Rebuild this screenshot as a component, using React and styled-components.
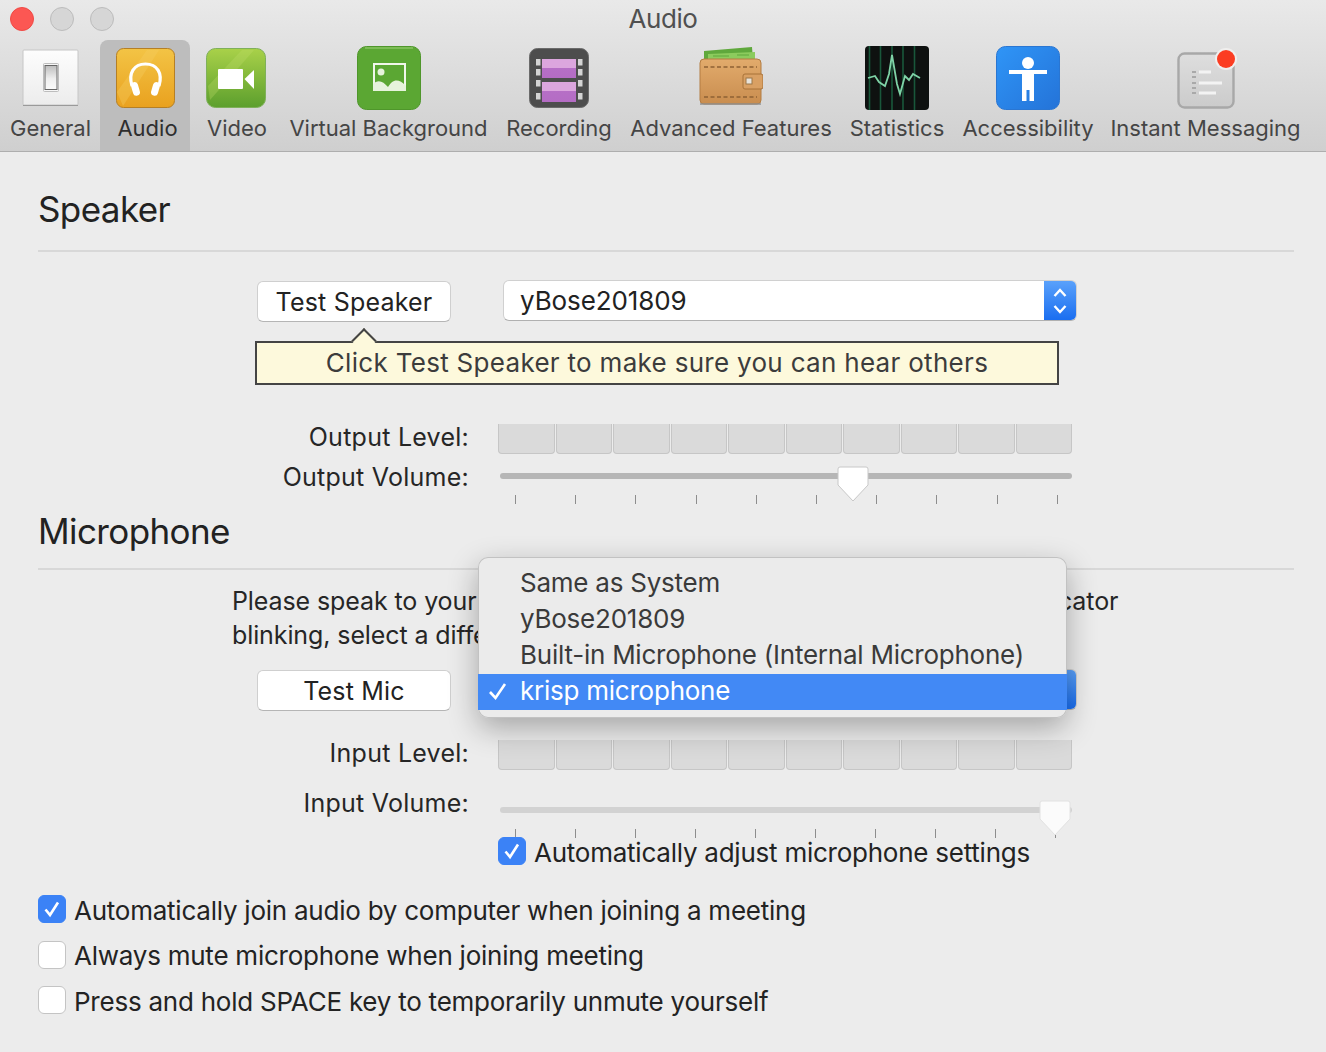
import React from 'react';
import styled, { createGlobalStyle } from 'styled-components';

const GlobalStyle = createGlobalStyle`
  html, body { margin: 0; padding: 0; background: #ececec; }
  body { font-family: Inter, "Noto Sans", sans-serif; color: #232323; }
  #root { width: 1326px; height: 1052px; overflow: hidden; }
`;

const GeneralIcon = () => (
  <svg width="64" height="64" viewBox="0 0 64 64">
    <defs>
      <linearGradient id="genPlate" x1="0" y1="0" x2="0" y2="1">
        <stop offset="0" stopColor="#fdfdfd" />
        <stop offset="1" stopColor="#ececec" />
      </linearGradient>
      <linearGradient id="genRocker" x1="0" y1="0" x2="0" y2="1">
        <stop offset="0" stopColor="#bdbdbd" />
        <stop offset="0.55" stopColor="#efefef" />
        <stop offset="1" stopColor="#fafafa" />
      </linearGradient>
    </defs>
    <rect x="4" y="4" width="55" height="55" rx="1" fill="url(#genPlate)" stroke="#c6c6c6" />
    <rect x="4" y="59" width="55" height="1" fill="#9a9a9a" />
    <rect x="24.5" y="17.5" width="15" height="28" rx="1" fill="#f6f6f6" stroke="#bdbdbd" />
    <rect x="26" y="19.5" width="12" height="24" fill="url(#genRocker)" stroke="#666" />
  </svg>
);

const AudioIcon = () => (
  <svg width="64" height="64" viewBox="0 0 64 64">
    <defs>
      <linearGradient id="audBg" x1="0" y1="0" x2="0" y2="1">
        <stop offset="0" stopColor="#f3c445" />
        <stop offset="1" stopColor="#e9a11f" />
      </linearGradient>
    </defs>
    <rect x="3.5" y="2.5" width="58" height="59" rx="7" fill="url(#audBg)" stroke="#b57f25" />
    <path d="M4 46 L34 4 L46 4 L10 60 Z" fill="#f6cf60" opacity=".35" />
    <path d="M19 40 C15 27 21 18 32.5 18 C44 18 50 27 46 40" fill="none" stroke="#fff" strokeWidth="3.2" />
    <rect x="19" y="36" width="7" height="14" rx="3.5" fill="#fff" transform="rotate(-16 22 43)" />
    <rect x="39" y="36" width="7" height="14" rx="3.5" fill="#fff" transform="rotate(16 43 43)" />
  </svg>
);

const VideoIcon = () => (
  <svg width="64" height="64" viewBox="0 0 64 64">
    <defs>
      <linearGradient id="vidBg" x1="0" y1="0" x2="0" y2="1">
        <stop offset="0" stopColor="#a9d149" />
        <stop offset="1" stopColor="#5c9f2d" />
      </linearGradient>
    </defs>
    <rect x="2.5" y="2.5" width="59" height="59" rx="9" fill="url(#vidBg)" stroke="#7fb05a" />
    <path d="M4 40 L38 4 L50 4 L6 54 Z" fill="#c0df6a" opacity=".3" />
    <rect x="14" y="23" width="25" height="20" rx="1" fill="#fff" />
    <path d="M40.5 33 L50 24 V43 Z" fill="#fff" />
  </svg>
);

const BackgroundIcon = () => (
  <svg width="64" height="64" viewBox="0 0 64 64">
    <rect x="0.5" y="0.5" width="63" height="63" rx="9" fill="#5ba733" stroke="#4f962b" />
    <path d="M8 2 H56" stroke="#7cbc55" strokeWidth="2" />
    <rect x="17" y="18" width="31" height="26" fill="none" stroke="#f0f7ea" strokeWidth="2" />
    <circle cx="24" cy="26" r="3.5" fill="#e6f3dc" />
    <path d="M16 45 V38 C21 33 26 35 31 41 C35 34 41 31 49 40 V45 Z" fill="#e6f3dc" />
  </svg>
);

const RecordingIcon = () => (
  <svg width="64" height="64" viewBox="0 0 64 64">
    <defs>
      <linearGradient id="recFrame" x1="0" y1="0" x2="0" y2="1">
        <stop offset="0" stopColor="#dca6de" />
        <stop offset="0.45" stopColor="#dca6de" />
        <stop offset="0.46" stopColor="#b66fc6" />
        <stop offset="1" stopColor="#b46cc4" />
      </linearGradient>
    </defs>
    <rect x="2.5" y="2.5" width="59" height="59" rx="8" fill="#4d4d4d" stroke="#6b6b6b" />
    <rect x="15" y="13" width="34" height="19" fill="url(#recFrame)" />
    <rect x="15" y="36" width="34" height="20" fill="url(#recFrame)" />
    {[13, 23, 34, 47].map(y => (
      <g key={y} fill="#d4d4d4">
        <rect x="9" y={y} width="4.5" height="6.5" />
        <rect x="51" y={y} width="4.5" height="6.5" />
      </g>
    ))}
  </svg>
);

const WalletIcon = () => (
  <svg width="64" height="64" viewBox="0 0 64 64">
    <defs>
      <linearGradient id="walBg" x1="0" y1="0" x2="0" y2="1">
        <stop offset="0" stopColor="#e2ab6c" />
        <stop offset="1" stopColor="#c98d4f" />
      </linearGradient>
    </defs>
    <path d="M5 5 L53 1 L54 14 H5 Z" fill="#5fa83c" />
    <path d="M9 8 L56 6 V14 H9 Z" fill="#8ccb5d" />
    <path d="M14 10 H30 M38 9 H50" stroke="#5fa83c" strokeWidth="1.2" />
    <rect x="1" y="13" width="61" height="45" rx="4" fill="url(#walBg)" stroke="#b37c42" />
    <rect x="1" y="57" width="61" height="2" fill="#8f8f8f" opacity=".7" />
    <path d="M5 21 H58 M5 51 H58" stroke="#8e6234" strokeWidth="1.5" strokeDasharray="4 2.5" />
    <rect x="44" y="28" width="20" height="15" rx="2" fill="#d9a063" stroke="#a87238" />
    <rect x="47" y="32" width="6" height="6" fill="#e8e3da" stroke="#9b7749" />
  </svg>
);

const StatisticsIcon = () => (
  <svg width="64" height="64" viewBox="0 0 64 64">
    <rect x="0" y="0" width="64" height="64" rx="4" fill="#0e1110" />
    <path d="M4.5 0 V64 M15.5 0 V64 M27 0 V64 M38 0 V64 M49.5 0 V64" stroke="#19573a" strokeWidth="1.6" />
    <path d="M3 32 L10 30 L14 36 L20 40 L24 28 L27 9 L32 38 L35 48 L40 30 L44 34 L48 28 L55 32" fill="none" stroke="#7fd3a7" strokeWidth="1.8" />
  </svg>
);

const AccessibilityIcon = () => (
  <svg width="64" height="64" viewBox="0 0 64 64">
    <defs>
      <linearGradient id="accBg" x1="0" y1="0" x2="1" y2="1">
        <stop offset="0" stopColor="#2f95f7" />
        <stop offset="1" stopColor="#2473d8" />
      </linearGradient>
    </defs>
    <rect x="0.5" y="0.5" width="63" height="63" rx="9" fill="url(#accBg)" stroke="#2a76d2" />
    <circle cx="32" cy="17" r="6" fill="#fff" />
    <path d="M13 24 H51 V28 H38 V55 H33.5 V44 H30.5 V55 H26 V28 H13 Z" fill="#fff" />
  </svg>
);

const MessagingIcon = () => (
  <svg width="64" height="64" viewBox="0 0 64 64">
    <defs>
      <linearGradient id="imBg" x1="0" y1="0" x2="0" y2="1">
        <stop offset="0" stopColor="#dedede" />
        <stop offset="1" stopColor="#cbcbcb" />
      </linearGradient>
    </defs>
    <rect x="4.5" y="7.5" width="55" height="54" rx="6" fill="url(#imBg)" stroke="#a8a8a8" strokeWidth="2.4" />
    <path d="M25 26 H37 M25 37 H48 M25 47 H42" stroke="#f3f3f3" strokeWidth="3" />
    <path d="M18 26 H22 M18 31 H22 M18 37 H22 M18 42 H22 M18 47 H22" stroke="#a9a9a9" strokeWidth="1.8" />
    <circle cx="52" cy="13" r="11" fill="#f0efee" />
    <circle cx="52" cy="13" r="9" fill="#fb3d22" />
  </svg>
);

const tabs = [
  { label: 'General', width: 99, Icon: GeneralIcon },
  { label: 'Audio', width: 90, Icon: AudioIcon, active: true },
  { label: 'Video', width: 94, Icon: VideoIcon, shift: -2 },
  { label: 'Virtual Background', width: 209, Icon: BackgroundIcon },
  { label: 'Recording', width: 132, Icon: RecordingIcon },
  { label: 'Advanced Features', width: 212, Icon: WalletIcon },
  { label: 'Statistics', width: 120, Icon: StatisticsIcon },
  { label: 'Accessibility', width: 142, Icon: AccessibilityIcon },
  { label: 'Instant Messaging', width: 213, Icon: MessagingIcon },
];

const bottomChecks = [
  { label: 'Automatically join audio by computer when joining a meeting', checked: true },
  { label: 'Always mute microphone when joining meeting' },
  { label: 'Press and hold SPACE key to temporarily unmute yourself' },
];

const devices = ['Same as System', 'yBose201809', 'Built-in Microphone (Internal Microphone)', 'krisp microphone'];

function Check({ checked, children }) {
  return (
    <CheckRow>
      <CheckBox $checked={checked}>
        {checked && (
          <svg width="20" height="20" viewBox="0 0 20 20">
            <path d="M3.5 10.5 L8 16 L16 3.5" fill="none" stroke="#fff" strokeWidth="2.6" />
          </svg>
        )}
      </CheckBox>
      <CheckLabel>{children}</CheckLabel>
    </CheckRow>
  );
}

function Select({ children }) {
  return (
    <SelectBox>
      <SelectValue>{children}</SelectValue>
      <SelectArrows>
        <svg width="14" height="28" viewBox="0 0 14 28">
          <path d="M1.5 9 L7 3 L12.5 9 M1.5 19 L7 25 L12.5 19" fill="none" stroke="#fff" strokeWidth="2.4" />
        </svg>
      </SelectArrows>
    </SelectBox>
  );
}

function Levels() {
  return (
    <LevelBar>
      {Array.from({ length: 10 }, (_, i) => <LevelCell key={i} />)}
    </LevelBar>
  );
}

function Slider({ top, thumb, dim, tickGap }) {
  return (
    <SliderWrap $top={top}>
      <Track $dim={dim}>
        <Thumb $left={thumb}>
          <svg width="32" height="36" viewBox="0 0 32 36">
            <path d="M1 3 Q1 1 3 1 H29 Q31 1 31 3 V19 L16 35 L1 19 Z" fill={dim ? '#fbfbfb' : '#fff'} stroke={dim ? '#e2e2e2' : '#c8c8c8'} />
          </svg>
        </Thumb>
      </Track>
      <Ticks $gap={tickGap}>
        {Array.from({ length: 10 }, (_, i) => <Tick key={i} />)}
      </Ticks>
    </SliderWrap>
  );
}

export default function App() {
  return (
    <Page>
      <GlobalStyle />
      <Toolbar>
        <TitleBar>
          <Lights>
            <Light $red />
            <Light />
            <Light />
          </Lights>
          <Title>Audio</Title>
        </TitleBar>
        <TabRow>
          {tabs.map(({ label, width, Icon, active, shift }) => (
            <Tab key={label} $width={width} $active={active}>
              <TabIcon $shift={shift}><Icon /></TabIcon>
              <TabLabel $active={active}>{label}</TabLabel>
            </Tab>
          ))}
        </TabRow>
      </Toolbar>

      <Main>
        <SectionHead $top={37} $bottom={21}>Speaker</SectionHead>
        <ControlRow $top={29}>
          <Button>Test Speaker</Button>
          <Select>yBose201809</Select>
        </ControlRow>
        <Tip>Click Test Speaker to make sure you can hear others</Tip>
        <FormRow $top={39}>
          <FormLabel>Output Level:</FormLabel>
          <Levels />
        </FormRow>
        <FormRow $top={12} $height={40}>
          <FormLabel $nudge={-2}>Output Volume:</FormLabel>
          <Slider top={7} thumb={355} tickGap={60.2} />
        </FormRow>

        <SectionHead $top={5} $bottom={17}>Microphone</SectionHead>
        <Para>
          <ParaLine>Please speak to your microphone, if you cannot see the input level indicator</ParaLine>
          <ParaLine>blinking, select a different microphone</ParaLine>
        </Para>
        <ControlRow $top={18}>
          <Button>Test Mic</Button>
          <Select>krisp microphone</Select>
        </ControlRow>
        <FormRow $top={29}>
          <FormLabel>Input Level:</FormLabel>
          <Levels />
        </FormRow>
        <FormRow $top={18} $height={51}>
          <FormLabel $nudge={2}>Input Volume:</FormLabel>
          <Slider top={19} thumb={557} dim tickGap={60} />
        </FormRow>
        <AutoAdjust>
          <Check checked>Automatically adjust microphone settings</Check>
        </AutoAdjust>
        <BottomChecks>
          {bottomChecks.map(c => <Check key={c.label} checked={c.checked}>{c.label}</Check>)}
        </BottomChecks>

        <DeviceMenu>
          {devices.map((d, i) => (
            <DeviceItem key={d} $selected={i === devices.length - 1}>
              {i === devices.length - 1 && (
                <MenuCheck>
                  <svg width="20" height="20" viewBox="0 0 20 20">
                    <path d="M2 11 L7.5 17 L17 3" fill="none" stroke="#fff" strokeWidth="2.6" />
                  </svg>
                </MenuCheck>
              )}
              {d}
            </DeviceItem>
          ))}
        </DeviceMenu>
      </Main>
    </Page>
  );
}

const Page = styled.div`
  width: 1326px;
  height: 1052px;
  background: #ececec;
  overflow: hidden;
`;

const Toolbar = styled.header`
  height: 151px;
  border-bottom: 1px solid #aeaeae;
  background: linear-gradient(#e9e9e9, #cfcfcf);
  display: flex;
  flex-direction: column;
`;

const TitleBar = styled.div`
  height: 40px;
  display: grid;
  grid-template-columns: 1fr auto 1fr;
  align-items: center;
  padding: 0 0 3px;
  box-sizing: border-box;
`;

const Lights = styled.div`
  display: flex;
  gap: 16px;
  padding-left: 10px;
`;

const Light = styled.span`
  width: 24px;
  height: 24px;
  box-sizing: border-box;
  border-radius: 50%;
  background: ${p => (p.$red ? '#fc5753' : '#d6d6d6')};
  border: 1px solid ${p => (p.$red ? '#f04a45' : '#bcbcbc')};
`;

const Title = styled.div`
  font-size: 26px;
  letter-spacing: -0.4px;
  color: #505050;
  line-height: 38px;
`;

const TabRow = styled.nav`
  display: flex;
  flex: 1;
  padding-left: 1px;
`;

const Tab = styled.div`
  width: ${p => p.$width}px;
  flex: none;
  display: flex;
  flex-direction: column;
  align-items: center;
  padding-top: 6px;
  box-sizing: border-box;
  border-radius: 8px 8px 0 0;
  background: ${p => (p.$active ? '#bdbdbd' : 'transparent')};
`;

const TabIcon = styled.div`
  width: 64px;
  height: 64px;
  margin-left: ${p => p.$shift || 0}px;
`;

const TabLabel = styled.div`
  font-size: 22px;
  line-height: 30px;
  margin-top: 3px;
  white-space: nowrap;
  color: ${p => (p.$active ? '#2e2e2e' : '#454545')};
  padding-left: ${p => (p.$active ? 5 : 0)}px;
`;

const Main = styled.main`
  position: relative;
  padding: 0 32px 0 38px;
`;

const SectionHead = styled.h2`
  margin: 0;
  padding: ${p => p.$top}px 0 ${p => p.$bottom}px;
  font-size: 35px;
  font-weight: 400;
  line-height: 40px;
  letter-spacing: -0.6px;
  color: #222;
  border-bottom: 2px solid #d8d8d8;
`;

const ControlRow = styled.div`
  display: flex;
  align-items: flex-start;
  gap: 52px;
  margin: ${p => p.$top}px 0 0 219px;
`;

const Button = styled.button`
  width: 194px;
  height: 41px;
  flex: none;
  font: inherit;
  font-size: 25px;
  letter-spacing: 0.2px;
  color: #222;
  background: #fff;
  border: 1px solid #cfcfcf;
  border-bottom-color: #b5b5b5;
  border-radius: 6px;
  padding: 0;
`;

const SelectBox = styled.div`
  width: 574px;
  height: 41px;
  margin-top: -1px;
  flex: none;
  display: flex;
  background: #fff;
  border: 1px solid #d0d0d0;
  border-bottom-color: #b0b0b0;
  border-radius: 6px;
  box-sizing: border-box;
  overflow: hidden;
`;

const SelectValue = styled.div`
  flex: 1;
  padding-left: 16px;
  font-size: 26px;
  line-height: 40px;
  letter-spacing: -0.1px;
  color: #222;
`;

const SelectArrows = styled.div`
  width: 32px;
  display: flex;
  align-items: center;
  justify-content: center;
  background: linear-gradient(#5aa1fb, #1a6ef0);
`;

const Tip = styled.div`
  position: relative;
  width: 804px;
  height: 44px;
  box-sizing: border-box;
  margin: 19px 0 0 217px;
  background: #fdf9dc;
  border: 2px solid #444;
  text-align: center;
  font-size: 26px;
  letter-spacing: 0.3px;
  line-height: 40px;
  color: #3c3c3c;

  &::before {
    content: '';
    position: absolute;
    left: 98px;
    top: -14px;
    width: 16px;
    height: 16px;
    background: #fdf9dc;
    border-top: 2px solid #444;
    border-left: 2px solid #444;
    transform: rotate(45deg) translate(2px, 2px);
  }
`;

const FormRow = styled.div`
  display: grid;
  grid-template-columns: 431px 574px;
  column-gap: 29px;
  height: ${p => p.$height || 30}px;
  margin-top: ${p => p.$top}px;
`;

const FormLabel = styled.div`
  font-size: 25px;
  line-height: 26px;
  letter-spacing: 0.25px;
  text-align: right;
  color: #262626;
  margin-top: ${p => p.$nudge || 0}px;
`;

const LevelBar = styled.div`
  display: grid;
  grid-template-columns: repeat(10, 1fr);
  gap: 1px;
  height: 30px;
`;

const LevelCell = styled.div`
  background: #dadada;
  border: 1px solid #c6c6c6;
  border-top: none;
  border-radius: 0 0 4px 4px;
`;

const SliderWrap = styled.div`
  padding: ${p => p.$top}px 0 0 2px;
`;

const Track = styled.div`
  position: relative;
  height: 6px;
  border-radius: 3px;
  background: ${p => (p.$dim ? '#d2d2d2' : '#b6b6b6')};
`;

const Thumb = styled.div`
  position: absolute;
  left: ${p => p.$left - 18}px;
  top: -7px;
  line-height: 0;
`;

const Ticks = styled.div`
  display: flex;
  gap: ${p => p.$gap - 1}px;
  padding-left: 15px;
  margin-top: 16px;
`;

const Tick = styled.span`
  width: 1px;
  height: 9px;
  background: #8d8d8d;
`;

const Para = styled.div`
  margin: 14px 0 0 194px;
`;

const ParaLine = styled.div`
  font-size: 25px;
  line-height: 34px;
  letter-spacing: -0.1px;
  white-space: nowrap;
  color: #262626;
`;

const AutoAdjust = styled.div`
  margin: -2px 0 0 460px;
  height: 28px;
`;

const BottomChecks = styled.div`
  display: flex;
  flex-direction: column;
  gap: 17.5px;
  margin-top: 30px;
`;

const CheckRow = styled.div`
  display: flex;
  align-items: center;
  gap: 8px;
  height: 28px;
`;

const CheckBox = styled.span`
  width: 28px;
  height: 28px;
  box-sizing: border-box;
  display: flex;
  align-items: center;
  justify-content: center;
  border-radius: 6px;
  flex: none;
  background: ${p => (p.$checked ? '#3b82f6' : '#fff')};
  border: 1px solid ${p => (p.$checked ? '#3b82f6' : '#c4c4c4')};
`;

const CheckLabel = styled.span`
  font-size: 26px;
  letter-spacing: -0.24px;
  white-space: nowrap;
  color: #232323;
  padding-top: 2px;
`;

const DeviceMenu = styled.div`
  position: absolute;
  left: 478px;
  top: 405px;
  width: 589px;
  height: 161px;
  box-sizing: border-box;
  padding-top: 9px;
  background: #ebebeb;
  border-radius: 10px;
  box-shadow: inset 0 0 0 1px #c2c2c2, 0 10px 30px rgba(0, 0, 0, 0.3);
`;

const DeviceItem = styled.div`
  position: relative;
  height: 36px;
  line-height: 34px;
  padding-left: 42px;
  font-size: 26px;
  letter-spacing: -0.24px;
  white-space: nowrap;
  color: ${p => (p.$selected ? '#fff' : '#3a3a3a')};
  background: ${p => (p.$selected ? '#4289f5' : 'transparent')};
`;

const MenuCheck = styled.span`
  position: absolute;
  left: 10px;
  top: 7px;
  line-height: 0;
`;
